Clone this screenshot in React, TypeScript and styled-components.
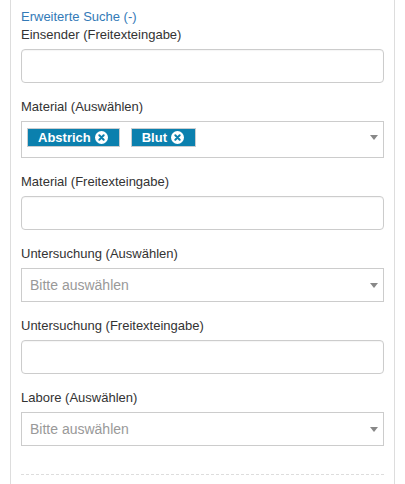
import React from "react";
import styled, { createGlobalStyle } from "styled-components";

const Global = createGlobalStyle`
  html, body { margin: 0; padding: 0; background: #fff; }
  body { font-family: "Liberation Sans", Arial, sans-serif; color: #333; overflow: hidden; }
  * { box-sizing: border-box; }
`;

const Page = styled.div`
  padding: 0 10px;
  height: 484px;
`;

const Panel = styled.div`
  border-left: 1px solid #ddd;
  border-right: 1px solid #ddd;
  padding: 8px 10px 20px;
  min-height: 484px;
`;

const ToggleLink = styled.a`
  display: block;
  font-size: 13px;
  line-height: 18px;
  color: #337ab7;
  text-decoration: none;
  cursor: pointer;
`;

const FormGroup = styled.div`
  margin-bottom: 15px;
`;

const Label = styled.label`
  display: block;
  font-size: 13px;
  line-height: 18px;
  margin-bottom: 5px;
  color: #333;
`;

const TextInput = styled.input`
  display: block;
  width: 100%;
  height: 34px;
  border: 1px solid #ccc;
  border-radius: 4px;
  padding: 6px 12px;
  font-family: inherit;
  font-size: 14px;
  color: #555;
  box-shadow: inset 0 1px 1px rgba(0, 0, 0, 0.04);
  outline: none;
`;

const SelectBox = styled.div<{ $multi?: boolean }>`
  display: flex;
  align-items: ${(p) => (p.$multi ? "flex-start" : "center")};
  width: 100%;
  height: ${(p) => (p.$multi ? "37px" : "34px")};
  border: 1px solid #ccc;
  padding: ${(p) => (p.$multi ? "6px 0 10px 5px" : "0 0 0 8px")};
  background: #fff;
`;

const SelectContent = styled.div`
  flex: 1;
  display: flex;
  align-items: center;
  gap: 11px;
  min-width: 0;
`;

const Placeholder = styled.span`
  font-size: 14px;
  color: #999;
  line-height: 20px;
`;

const Arrow = styled.span`
  width: 0;
  height: 0;
  border-style: solid;
  border-width: 5px 4px 0 4px;
  border-color: #888 transparent transparent transparent;
  margin-right: 5px;
  align-self: center;
`;

const Tag = styled.span`
  display: inline-flex;
  align-items: center;
  gap: 4px;
  height: 19px;
  padding: 0 11px 0 10px;
  background: #0b80ae;
  border: 1px solid #c9cdd0;
  color: #fff;
  font-weight: bold;
  font-size: 13px;
  line-height: 17px;
`;

const Divider = styled.div`
  border-top: 1px dashed #ddd;
  margin-top: 28px;
`;

const RemoveIcon = () => (
  <svg width="13" height="13" viewBox="0 0 13 13" aria-hidden="true">
    <circle cx="6.5" cy="6.5" r="6.5" fill="#fff" />
    <path d="M4.3 4.3 L8.7 8.7 M8.7 4.3 L4.3 8.7" stroke="#0b80ae" strokeWidth="2" strokeLinecap="round" />
  </svg>
);

const TextField = ({ label }: { label: string }) => (
  <FormGroup>
    <Label>{label}</Label>
    <TextInput type="text" />
  </FormGroup>
);

const SingleSelect = ({ label }: { label: string }) => (
  <FormGroup>
    <Label>{label}</Label>
    <SelectBox>
      <SelectContent>
        <Placeholder>Bitte auswählen</Placeholder>
      </SelectContent>
      <Arrow />
    </SelectBox>
  </FormGroup>
);

const MultiSelect = ({ label, values }: { label: string; values: string[] }) => (
  <FormGroup>
    <Label>{label}</Label>
    <SelectBox $multi>
      <SelectContent>
        {values.map((v) => (
          <Tag key={v}>
            {v}
            <RemoveIcon />
          </Tag>
        ))}
      </SelectContent>
      <Arrow />
    </SelectBox>
  </FormGroup>
);

export default function App() {
  return (
    <>
      <Global />
      <Page>
        <Panel>
          <ToggleLink>Erweiterte Suche (-)</ToggleLink>
          <TextField label="Einsender (Freitexteingabe)" />
          <MultiSelect label="Material (Auswählen)" values={["Abstrich", "Blut"]} />
          <TextField label="Material (Freitexteingabe)" />
          <SingleSelect label="Untersuchung (Auswählen)" />
          <TextField label="Untersuchung (Freitexteingabe)" />
          <SingleSelect label="Labore (Auswählen)" />
          <Divider />
        </Panel>
      </Page>
    </>
  );
}
